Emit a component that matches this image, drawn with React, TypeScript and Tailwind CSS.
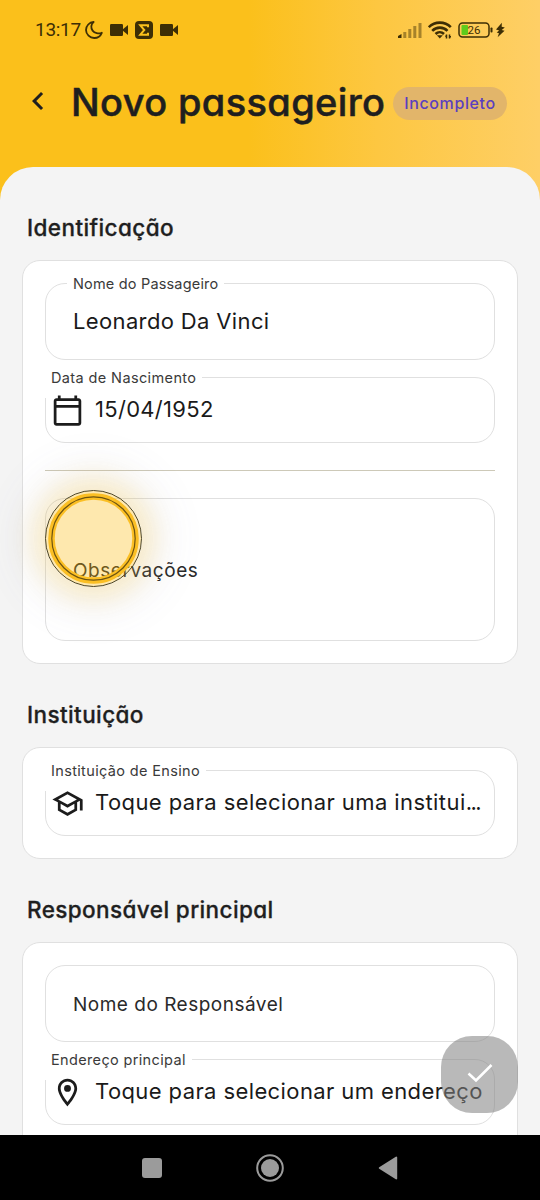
import React from 'react';

type FieldProps = {
  label: string;
  labelClass?: string;
  children?: React.ReactNode;
};

const TextField = ({ label, labelClass = '', children }: FieldProps) => (
  <div className="relative flex h-[77px] items-center rounded-[20px] border border-[#e0e0e0] pl-[27px]">
    {children ? (
      <>
        <span className={`absolute -top-[10px] left-[21px] bg-white px-1.5 text-[14.5px] leading-5 whitespace-nowrap text-[#3a3a3a] ${labelClass}`}>
          {label}
        </span>
        {children}
      </>
    ) : (
      <span className={`pt-[3px] text-[19px] whitespace-nowrap text-[#2a2a2a] ${labelClass}`}>{label}</span>
    )}
  </div>
);

const PickerField = ({ label, labelClass = '', children }: FieldProps) => (
  <div className="relative flex h-[66px] items-center gap-[11px] rounded-[20px] border border-[#e0e0e0] pl-[5px]">
    <span className={`absolute -top-[10px] -left-px h-[30px] bg-white px-1.5 text-[14.5px] leading-5 whitespace-nowrap text-[#3a3a3a] ${labelClass}`}>
      {label}
    </span>
    {children}
  </div>
);

const Icon = ({ d }: { d: string }) => (
  <svg viewBox="0 0 24 24" className="relative size-[33px] shrink-0 fill-[#1c1c1c]">
    <path d={d} />
  </svg>
);

const SectionTitle = ({ children }: { children: React.ReactNode }) => (
  <h2 className="mb-4 ml-[5px] h-[34px] text-[22.5px] leading-[35px] font-medium tracking-[0.4px] whitespace-nowrap text-[#1f1f1f] [-webkit-text-stroke:0.3px] [font-feature-settings:'cv11']">
    {children}
  </h2>
);

const Card = ({ className = '', children }: { className?: string; children: React.ReactNode }) => (
  <div className={`mb-[33px] rounded-[18px] border border-[#e0e0e0] bg-white p-[22px] ${className}`}>{children}</div>
);

const Camera = () => (
  <svg viewBox="0 0 18 12" className="h-3 w-[18px] fill-[#3d2e05]">
    <rect width="13" height="12" rx="1.2" />
    <path d="M12 6L18 1v10z" />
  </svg>
);

const StatusBar = () => (
  <div className="flex h-[60px] items-center pr-[35px] pl-[35px] text-[#3d2e05]">
    <span className="w-[50px] font-[Roboto] text-[19px] tracking-[-0.3px]">13:17</span>
    <svg viewBox="0 0 18 18" className="h-[18px] w-[18px] fill-none stroke-[#3d2e05] stroke-[1.8]">
      <path d="M8.600 1C5.800 3 5.700 7 7.600 9.600s6 3.500 9.200 2.200C15.500 15 12.500 17 9.300 17A8.200 8.200 0 0 1 1 9C1 4.800 4.400 1.200 8.600 1z" strokeLinejoin="round" />
    </svg>
    <div className="ml-[7px] flex items-center gap-[7px]">
      <Camera />
      <svg viewBox="0 0 18 18" className="size-[18px]">
        <rect width="18" height="18" rx="4" className="fill-[#3d2e05]" />
        <path d="M13 6.200V4.300H5.300L9.300 9 5.300 13.700H13V11.800" className="fill-none stroke-[#fbc11b] stroke-2" />
      </svg>
      <Camera />
    </div>
    <svg viewBox="0 0 24 15" className="ml-auto h-[15px] w-6 fill-[#3d2e05]">
      <path d="M0 15v-2l3.500-2v4z" />
      <g className="opacity-45">
        <rect x="5.300" y="9" width="3" height="6" />
        <rect x="10.300" y="6" width="3" height="9" />
        <rect x="15.300" y="3" width="3" height="12" />
        <rect x="20.500" y="0" width="3" height="15" />
      </g>
    </svg>
    <svg viewBox="0 0 24 18" className="ml-[6px] h-[18px] w-6 fill-none stroke-[#3d2e05] stroke-[2.600]">
      <path d="M.8 6.200a15.500 15.500 0 0 1 22 0M4.200 9.800a10.800 10.800 0 0 1 15.300 0M7.500 13a6.200 6.200 0 0 1 8.500 0" />
      <path d="M8.800 14.300h6L11.800 17.600z" className="fill-[#3d2e05] stroke-none" />
      <path d="M18.500 17.500v-4M21.500 13.500v4M17.300 15.200h1.200M21.500 15.800h1.500" className="stroke-[1.500]" />
    </svg>
    <svg viewBox="0 0 36 16" className="ml-[6px] h-4 w-9">
      <rect x="1" y="1" width="30" height="14" rx="3.500" className="fill-none stroke-[#3d2e05] stroke-[1.500]" />
      <rect x="3.500" y="3" width="6.500" height="10" rx="1" className="fill-[#5fcb1c]" />
      <text x="16" y="12" textAnchor="middle" className="fill-[#3d2e05] font-[Roboto] text-[11.500px]">26</text>
      <rect x="32.500" y="5.500" width="2" height="5" rx=".8" className="fill-[#3d2e05]" />
    </svg>
    <svg viewBox="0 0 10 16" className="ml-[2px] h-4 w-[9px] fill-[#3d2e05]">
      <path d="M6.500 0L0 7.500l3.500 1L.8 10.800l2.500.7L1.800 16 9.500 8.800 6.300 7.900 9.800 5.200 6.300 4.500z" />
    </svg>
  </div>
);

const TouchMarker = () => (
  <div className="pointer-events-none absolute top-[490px] left-[45px] z-10 size-[97px] rounded-full shadow-[0_0_26px_12px_rgba(253,205,70,0.27),0_0_40px_30px_rgba(110,110,130,0.06)]">
    <svg viewBox="0 0 97 97" className="size-full">
      <circle cx="48.500" cy="48.500" r="48" className="fill-[#fcba08]/33 stroke-[#4d4527] stroke-1" />
      <circle cx="48.500" cy="48.500" r="42" className="fill-none stroke-[#fbbf24] stroke-[6.500]" />
      <circle cx="48.500" cy="48.500" r="41.700" className="fill-none stroke-[#6e5410] stroke-[1.200]" />
    </svg>
  </div>
);

const App = () => {
  return (
    <div className="relative flex h-[1200px] w-[540px] flex-col overflow-hidden bg-[linear-gradient(90deg,#fbc01b_0%,#fbc01b_46%,#fdc741_70%,#fecf66_100%)] bg-white font-[Inter,sans-serif]">
      <StatusBar />

      {/* Header */}
      <header className="flex h-[107px] shrink-0 items-start pt-[22px]">
        <svg viewBox="0 0 24 24" className="mt-[1px] ml-[20px] size-9 shrink-0 fill-[#1f1f1f]">
          <path d="M15.410 7.410L14 6l-6 6 6 6 1.410-1.410L10.830 12z" />
        </svg>
        <h1 className="ml-[15px] w-[322px] shrink-0 text-[38px] leading-[41px] font-medium tracking-[0.36px] whitespace-nowrap text-[#1f1f1f] [-webkit-text-stroke:0.5px] [font-feature-settings:'cv11']">
          Novo passageiro
        </h1>
        <span className="mt-[5px] flex h-[33px] w-[114px] shrink-0 items-center justify-center rounded-full bg-[#e2b56a] pb-px text-[16px] font-medium tracking-[0.6px] text-[#5a3fc0]">
          Incompleto
        </span>
      </header>

      {/* Form */}
      <main className="min-h-0 flex-1 overflow-hidden rounded-t-[33px] bg-[#f4f4f4] px-[22px] pt-[43px]">
        <SectionTitle>Identificação</SectionTitle>
        <Card>
          <TextField label="Nome do Passageiro" labelClass="tracking-[0.180px]">
            <span className="text-[22px] tracking-[0.36px] text-[#1a1a1a]">Leonardo Da Vinci</span>
          </TextField>
          <div className="mt-[17px]">
            <PickerField label="Data de Nascimento" labelClass="tracking-[0.380px]">
              <Icon d="M20 3h-1V1h-2v2H7V1H5v2H4c-1.100 0-2 .9-2 2v16c0 1.100.9 2 2 2h16c1.100 0 2-.9 2-2V5c0-1.100-.9-2-2-2zm0 18H4V10h16v11zm0-13H4V5h16v3z" />
              <span className="pb-[2px] text-[22px] tracking-[0.3px] text-[#1a1a1a]">15/04/1952</span>
            </PickerField>
          </div>
          <div className="my-[27px] h-px bg-[#cdc9b8]" />
          <div className="flex h-[143px] items-center rounded-[20px] border border-[#e0e0e0] pt-[3px] pl-[27px]">
            <span className="text-[19px] tracking-[0.55px] text-[#2a2a2a]">Observações</span>
          </div>
        </Card>

        <SectionTitle>Instituição</SectionTitle>
        <Card>
          <PickerField label="Instituição de Ensino" labelClass="tracking-[0.350px]">
            <Icon d="M12 3L1 9l4 2.180v6L12 21l7-3.820v-6l2-1.090V17h2V9L12 3zm6.820 6L12 12.720 5.180 9 12 5.280 18.820 9zM17 15.990l-5 2.730-5-2.730v-3.720L12 15l5-2.730v3.720z" />
            <span className="pb-[2px] text-[22px] whitespace-nowrap text-[#1a1a1a]">
              <span className="tracking-[0.42px]">Toque para selecionar uma institui</span>
              <span className="tracking-[-1.5px]">...</span>
            </span>
          </PickerField>
        </Card>

        <SectionTitle>Responsável principal</SectionTitle>
        <Card className="h-[300px]">
          <TextField label="Nome do Responsável" labelClass="tracking-[0.5px]" />
          <div className="mt-[17px]">
            <PickerField label="Endereço principal" labelClass="tracking-[0.350px]">
              <Icon d="M12 2C8.130 2 5 5.130 5 9c0 5.250 7 13 7 13s7-7.750 7-13c0-3.870-3.130-7-7-7zM7 9c0-2.760 2.240-5 5-5s5 2.240 5 5c0 2.880-2.880 7.190-5 9.880C9.920 16.210 7 11.850 7 9zM12 6.500a2.500 2.500 0 1 0 0 5 2.500 2.500 0 0 0 0-5z" />
              <span className="pb-[2px] text-[22px] tracking-[0.4px] whitespace-nowrap text-[#1a1a1a]">Toque para selecionar um endereço</span>
            </PickerField>
          </div>
        </Card>
      </main>

      {/* Android navigation */}
      <nav className="flex h-[65px] shrink-0 items-center justify-center gap-[94px] bg-black">
        <div className="size-5 rounded-[3px] bg-[#9b9b9b]" />
        <svg viewBox="0 0 28 28" className="size-7">
          <circle cx="14" cy="14" r="12.800" className="fill-none stroke-[#9b9b9b] stroke-2" />
          <circle cx="14" cy="14" r="9" className="fill-[#9b9b9b]" />
        </svg>
        <svg viewBox="0 0 20 24" className="h-6 w-5 fill-[#9b9b9b]">
          <path d="M17.800.7L1.200 11.200a1 1 0 0 0 0 1.600L17.800 23.300a.9.9 0 0 0 1.400-.8V1.500a.9.900 0 0 0-1.400-.8z" />
        </svg>
      </nav>

      <TouchMarker />
      <button className="absolute top-[1036px] left-[441px] flex size-[77px] items-center justify-center rounded-[31px] bg-[#828282]/56">
        <svg viewBox="0 0 26 20" className="mb-[3px] h-5 w-[26px] fill-none stroke-white stroke-[2.600]">
          <path d="M1.500 10.500l7.500 7L24.500 2" />
        </svg>
      </button>
    </div>
  );
};

export default App;
